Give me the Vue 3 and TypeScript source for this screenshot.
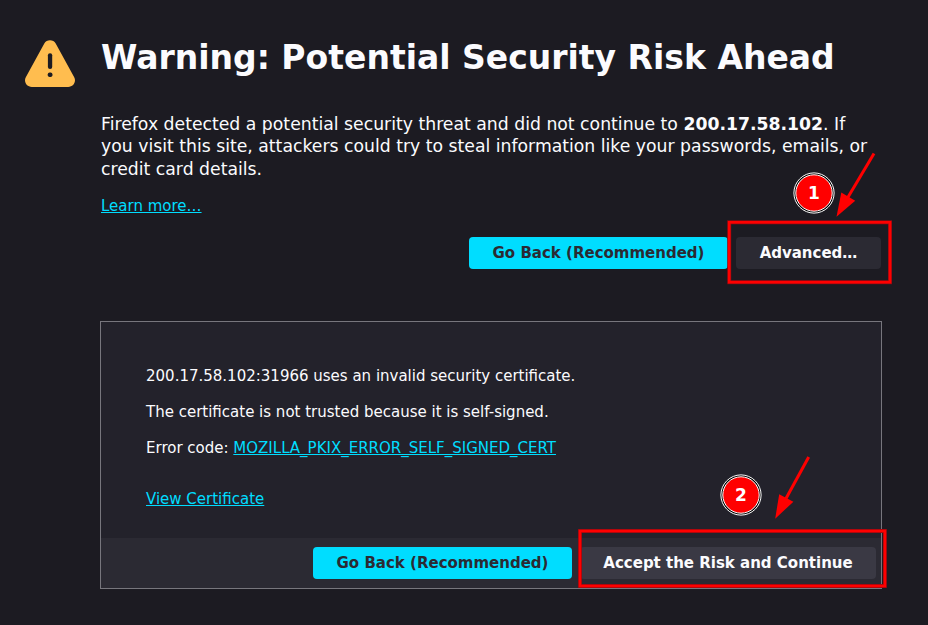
<script setup lang="ts">
interface Step {
  label: string
  cx: number
  cy: number
  shaft: string
  head: string
  box: { x: number; y: number; width: number; height: number }
}

const host = '200.17.58.102'
const errorCode = 'MOZILLA_PKIX_ERROR_SELF_SIGNED_CERT'

const steps: Step[] = [
  {
    label: '1',
    cx: 814,
    cy: 193,
    shaft: 'M874 153.5L847.5 198',
    head: '836.5,216.8 841.3,192.5 855.2,200.7',
    box: { x: 729.2, y: 222.3, width: 160.8, height: 59.9 },
  },
  {
    label: '2',
    cx: 741,
    cy: 495,
    shaft: 'M808.7 457L786 498.5',
    head: '775.2,518.7 779.2,494.2 793.4,501.7',
    box: { x: 580, y: 531, width: 304.9, height: 55 },
  },
]
</script>

<template>
  <div class="page">
    <main class="container">
      <header class="title">
        <svg class="warning-icon" width="50" height="47" viewBox="0 0 50 47">
          <path
            class="triangle"
            d="M19.3 3.5C21.6-.9 28.4-.9 30.7 3.5L49.2 37.2C51.6 41.7 48.3 47 43.2 47H6.8C1.7 47-1.6 41.7.8 37.2Z"
          />
          <rect class="mark" x="22.9" y="13.2" width="4.3" height="15.9" rx="2.1" />
          <rect class="mark" x="22.8" y="32.4" width="4.6" height="4.6" rx="1.8" />
        </svg>
        <h1>Warning: Potential Security Risk Ahead</h1>
      </header>

      <section class="content">
        <p class="intro">
          Firefox detected a potential security threat and did not continue to
          <strong>{{ host }}</strong>. If you visit this site, attackers could try to steal
          information like your passwords, emails, or credit card details.
        </p>
        <p class="learn"><a>Learn more…</a></p>
        <div class="buttons">
          <button class="primary">Go Back (Recommended)</button>
          <button class="advanced">Advanced…</button>
        </div>
      </section>

      <section class="panel">
        <div class="details">
          <p>{{ host }}:31966 uses an invalid security certificate.</p>
          <p>The certificate is not trusted because it is self-signed.</p>
          <p>Error code: <a>{{ errorCode }}</a></p>
          <p class="view"><a>View Certificate</a></p>
        </div>
        <div class="panel-buttons">
          <button class="primary">Go Back (Recommended)</button>
          <button class="accept">Accept the Risk and Continue</button>
        </div>
      </section>
    </main>

    <svg class="annotations" width="928" height="625" viewBox="0 0 928 625">
      <g v-for="step in steps" :key="step.label">
        <rect class="box-edge" v-bind="step.box" />
        <rect class="box" v-bind="step.box" />
        <path class="shaft" :d="step.shaft" />
        <polygon class="head" :points="step.head" />
        <circle class="ring" :cx="step.cx" :cy="step.cy" r="20.1" />
        <circle class="disc" :cx="step.cx" :cy="step.cy" r="18.2" />
        <text class="number" :x="step.cx" :y="step.cy + 6">{{ step.label }}</text>
      </g>
    </svg>
  </div>
</template>

<style>
body {
  margin: 0;
  background: #1c1b22;
}
</style>

<style scoped>
.page {
  position: relative;
  box-sizing: border-box;
  width: 928px;
  height: 625px;
  overflow: hidden;
  background: #1c1b22;
  color: #fbfbfe;
  font: 15px/18px 'DejaVu Sans', sans-serif;
}
.container {
  padding: 36px 46px 0 25px;
}
.title {
  display: flex;
  gap: 26px;
  height: 77px;
}
.warning-icon {
  flex: none;
  margin-top: 4px;
}
.triangle {
  fill: #ffbd4f;
}
.mark {
  fill: #1c1b22;
}
h1 {
  margin: 0;
  font-size: 33px;
  line-height: 44px;
  font-weight: bold;
  white-space: nowrap;
}
.content {
  padding-left: 76px;
}
p {
  margin: 0;
}
.intro {
  font-size: 17.25px;
  line-height: 22.425px;
}
.learn {
  margin-top: 16.725px;
}
a {
  color: #00ddff;
  text-decoration: underline;
}
.buttons {
  display: flex;
  justify-content: flex-end;
  gap: 8px;
  margin-top: 22px;
  padding-right: 1px;
}
button {
  box-sizing: border-box;
  height: 32px;
  padding: 0;
  border: 0;
  border-radius: 4px;
  color: #fbfbfe;
  font: bold 15px/32px 'DejaVu Sans', sans-serif;
  white-space: nowrap;
}
.primary {
  width: 259px;
  background: #00ddff;
  color: #2b2a33;
}
.advanced {
  width: 145px;
  background: #2b2a33;
}
.panel {
  box-sizing: border-box;
  width: 782px;
  height: 268px;
  margin: 52px 0 0 75px;
  border: 1px solid #77767d;
  background: #23222b;
  display: flex;
  flex-direction: column;
}
.details {
  flex: 1;
  padding: 45px 45px 0;
  display: flex;
  flex-direction: column;
  gap: 18px;
}
.view {
  margin-top: 15px;
}
.panel-buttons {
  display: flex;
  justify-content: flex-end;
  gap: 8px;
  height: 50px;
  box-sizing: border-box;
  padding: 9px 5px;
  background: #2b2a33;
}
.accept {
  width: 296px;
  background: #3a3944;
}
.annotations {
  position: absolute;
  inset: 0;
}
.box-edge {
  fill: none;
  stroke: #8e0b12;
  stroke-width: 4;
}
.box {
  fill: none;
  stroke: #ff0000;
  stroke-width: 2.6;
}
.shaft {
  fill: none;
  stroke: #ff0000;
  stroke-width: 3;
}
.head {
  fill: #ff0000;
}
.ring {
  fill: #000;
  stroke: #fff;
  stroke-width: 1;
}
.disc {
  fill: #ff0000;
  stroke: #fff;
  stroke-width: 1;
}
.number {
  fill: #fff;
  font: bold 17px 'DejaVu Sans', sans-serif;
  text-anchor: middle;
}
</style>
